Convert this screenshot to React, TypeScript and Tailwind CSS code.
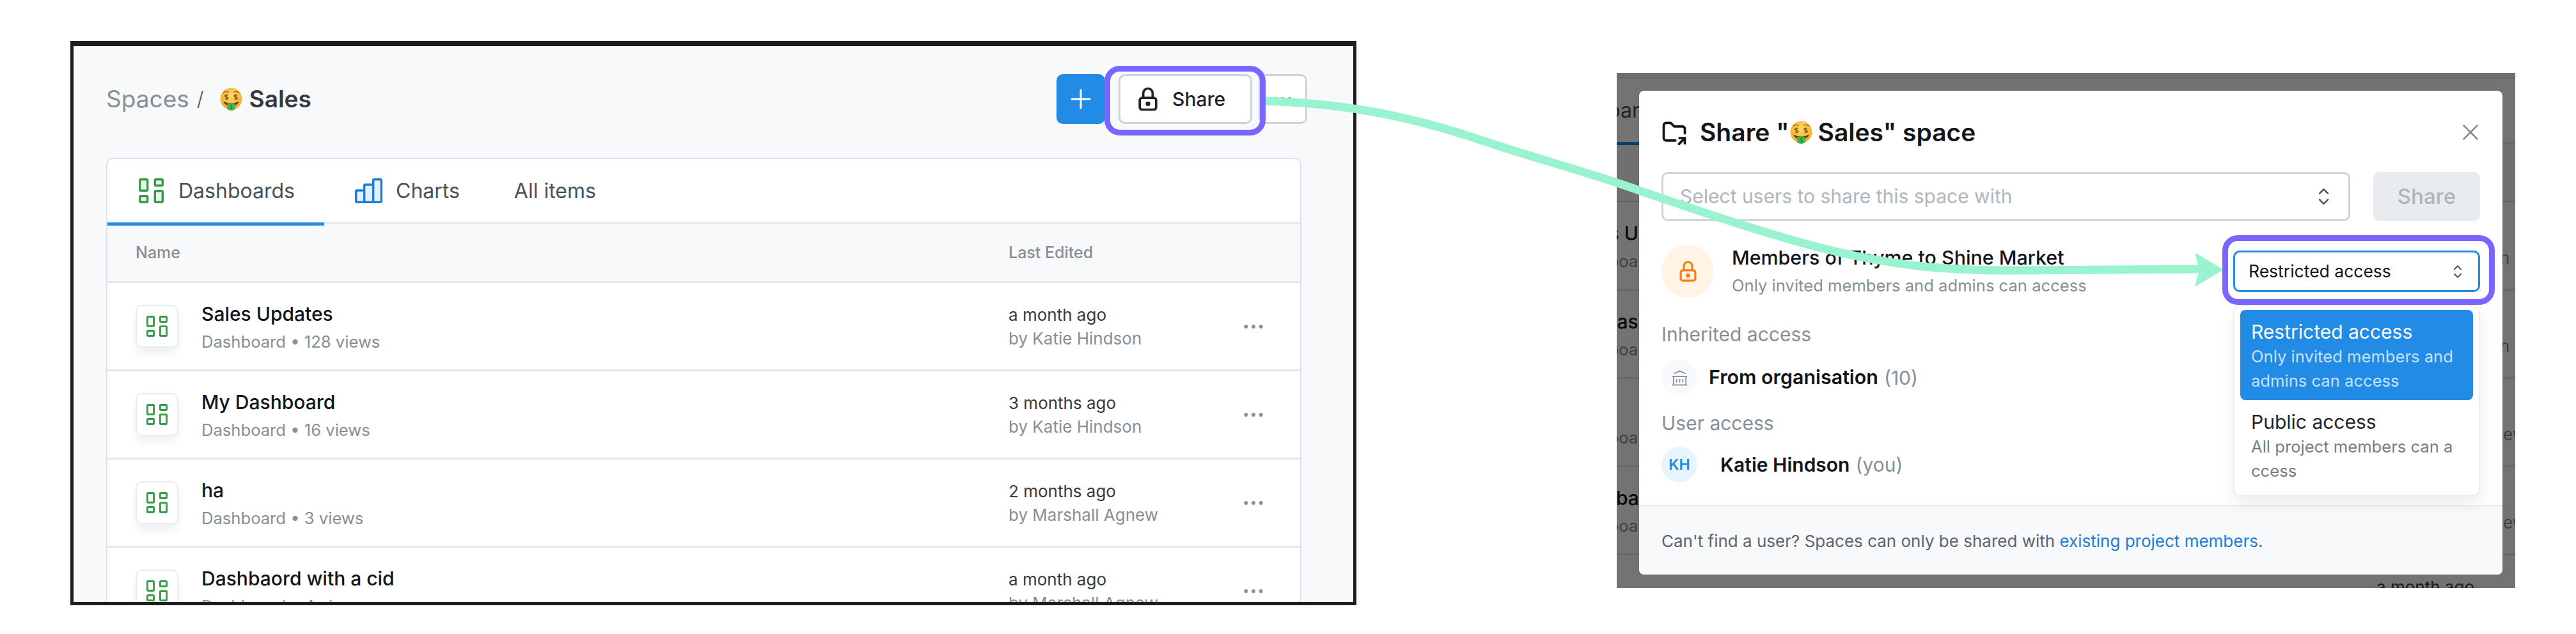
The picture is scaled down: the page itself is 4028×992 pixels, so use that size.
import { TbBuildingBank, TbDots, TbFolderShare, TbLock, TbPlus, TbSelector, TbX } from "react-icons/tb";

const rows = [
  { name: "Sales Updates", views: "128 views", date: "a month ago", by: "Katie Hindson" },
  { name: "My Dashboard", views: "16 views", date: "3 months ago", by: "Katie Hindson" },
  { name: "ha", views: "3 views", date: "2 months ago", by: "Marshall Agnew" },
  { name: "Dashbaord with a cid", views: "4 views", date: "a month ago", by: "Marshall Agnew" },
  { name: "Q4", views: "9 views", date: "a month ago", by: "Katie Hindson" },
];

function MoneyFace({ size }: { size: number }) {
  return (
    <svg width={size} height={size} viewBox="0 0 36 36" className="shrink-0">
      <defs>
        <radialGradient id="moneyFace" cx="50%" cy="35%" r="70%">
          <stop offset="0%" stopColor="#ffd96a" />
          <stop offset="100%" stopColor="#f0a51e" />
        </radialGradient>
      </defs>
      <circle cx="18" cy="17" r="16.5" fill="url(#moneyFace)" />
      <path d="M6 8q4-3 8-1M22 7q4-2 8 1" fill="none" stroke="#8a5a12" strokeWidth="1.2" strokeLinecap="round" />
      <path d="M11 10v8M25 10v8" stroke="#7a4a10" strokeWidth="1" />
      <path d="M13 12q-2-1.5-4 0t2 2.5 2 2.5-4 0M27 12q-2-1.5-4 0t2 2.5 2 2.5-4 0" fill="none" stroke="#7a4a10" strokeWidth="1.3" />
      <path d="M6 21q12 6 24 0q-2 7-12 7t-12-7z" fill="#6b3a10" />
      <path d="M12 24h12v9q-6 4-12 0z" fill="#3fb34f" />
      <path d="M18 26v7" stroke="#1f7a30" strokeWidth="1.4" />
    </svg>
  );
}

function DashboardIcon({ size, fill }: { size: number; fill: string }) {
  return (
    <svg width={size} height={size} viewBox="0 0 39 39" fill={fill} stroke="#2f9e44" strokeWidth="3.4" strokeLinejoin="round" className="shrink-0">
      <rect x="1.7" y="1.7" width="12" height="17.5" rx="1.5" />
      <rect x="25.3" y="1.7" width="12" height="9.6" rx="1.5" />
      <rect x="1.7" y="27.7" width="12" height="9.6" rx="1.5" />
      <rect x="25.3" y="19.7" width="12" height="17.6" rx="1.5" />
    </svg>
  );
}

function ChartIcon() {
  return (
    <svg width="43" height="39" viewBox="0 0 43 39" fill="#e7f0fa" stroke="#1c7ed6" strokeWidth="3.4" strokeLinejoin="round" className="shrink-0">
      <rect x="1.7" y="19" width="13" height="18.3" rx="1.5" />
      <rect x="14.7" y="10" width="14" height="27.3" rx="1" />
      <path d="M28.7 37.3V3.2q0-1.5 1.5-1.5h9.6q1.5 0 1.5 1.5v32.6q0 1.5-1.5 1.5z" />
    </svg>
  );
}

function PageContent({ ring }: { ring?: boolean }) {
  return (
    <div className="w-[2001px] shrink-0 bg-[#f8f9fa] pl-[51px] pt-[44px]">
      <div className="flex h-[78px] w-[1878px] items-center justify-between">
        <div className="flex items-center">
          <span className="text-[37px] text-[#868e96]">Spaces</span>
          <span className="ml-[12px] text-[31px] font-light text-[#495057]">/</span>
          <span className="ml-[24px]">
            <MoneyFace size={37} />
          </span>
          <span className="ml-[10px] text-[37px] font-semibold text-[#343a40]">Sales</span>
        </div>
        <div className="flex items-center">
          <button className="flex h-[78px] w-[76px] items-center justify-center rounded-[10px] bg-[#228be6] text-white">
            <TbPlus size={48} strokeWidth={1.5} />
          </button>
          <div className="relative ml-[21px]">
            <button className="flex h-[78px] w-[209px] items-center justify-start gap-[16px] rounded-[10px] border-[3px] border-[#ced4da] bg-white pl-[21px] text-[30px] font-medium text-[#212529]">
              <TbLock size={44} strokeWidth={2} />
              Share
            </button>
            {ring && <div className="absolute -top-[13px] -right-[21px] -bottom-[18px] -left-[22px] rounded-[24px] border-[9px] border-[#7866ff]" />}
          </div>
          <button className="ml-[10px] flex h-[78px] w-[76px] items-center justify-center rounded-[10px] border-[3px] border-[#ced4da] bg-white text-[#868e96]">
            <TbDots size={36} />
          </button>
        </div>
      </div>

      <div className="mt-[53px] w-[1869px] rounded-t-[10px] border-x-[2px] border-t-[2px] border-[#dee2e6] bg-white">
        <div className="flex h-[102px] border-b-[3px] border-[#e3e6ea] text-[32px] text-[#495057]">
          <div className="-mb-[3px] flex h-[104px] w-[339px] items-center border-b-[5px] border-[#228be6] pl-[49px]">
            <DashboardIcon size={39} fill="#eaf6ed" />
            <span className="ml-[23px]">Dashboards</span>
          </div>
          <div className="ml-[48px] flex items-center">
            <ChartIcon />
            <span className="ml-[21px]">Charts</span>
          </div>
          <div className="ml-[85px] flex items-center">All items</div>
        </div>
        <div className="flex h-[92px] items-center border-b-[3px] border-[#e3e6ea] bg-[#f8f9fa] pl-[44px] text-[25px] font-medium text-[#868e96]">
          <span className="w-[1365px]">Name</span>
          <span>Last Edited</span>
        </div>
        {rows.map((row) => (
          <div key={row.name} className="flex h-[138px] items-center border-b-[3px] border-[#e3e6ea] pl-[44px]">
            <div className="flex w-[1365px] items-center">
              <div className="flex h-[67px] w-[67px] items-center justify-center rounded-[10px] border-[2px] border-[#e9ecef] bg-white shadow-[0_10px_14px_rgba(0,0,0,0.06)]">
                <DashboardIcon size={33} fill="#ffffff" />
              </div>
              <div className="ml-[36px] pt-[4px]">
                <div className="text-[30px] leading-[44px] font-medium text-[#111418]">{row.name}</div>
                <div className="text-[25.6px] leading-[43px] text-[#868e96]">Dashboard • {row.views}</div>
              </div>
            </div>
            <div className="w-[363px]">
              <div className="text-[26px] leading-[37px] text-[#343a40]">{row.date}</div>
              <div className="text-[26px] leading-[37px] text-[#868e96]">by {row.by}</div>
            </div>
            <TbDots size={40} strokeWidth={1.5} className="text-[#868e96]" />
          </div>
        ))}
      </div>
    </div>
  );
}

function ShareModal() {
  return (
    <div className="absolute top-[28px] left-[35px] flex h-[757px] w-[1350px] flex-col rounded-[8px] bg-white">
      <div className="mt-[37px] flex h-[56px] items-center justify-between pr-[29px] pl-[33px]">
        <div className="flex items-center text-[39px] font-semibold text-[#111418]">
          <TbFolderShare size={44} strokeWidth={2} />
          <span className="ml-[18px]">Share "</span>
          <MoneyFace size={37} />
          <span className="ml-[8px]">Sales" space</span>
        </div>
        <TbX size={42} strokeWidth={1.5} className="text-[#868e96]" />
      </div>

      <div className="mt-[34px] flex gap-[36px] px-[35px]">
        <div className="flex h-[77px] w-[1077px] items-center justify-between rounded-[10px] border-[3px] border-[#ced4da] pr-[19px] pl-[26px] text-[30px] text-[#adb5bd]">
          Select users to share this space with
          <TbSelector size={39} strokeWidth={1.5} className="text-[#495057]" />
        </div>
        <div className="flex h-[77px] w-[167px] items-center justify-center rounded-[10px] bg-[#e9ecef] text-[33px] font-medium text-[#adb5bd]">Share</div>
      </div>

      <div className="relative mt-[37px] flex h-[83px] items-center px-[35px]">
        <div className="flex h-[83px] w-[82px] items-center justify-center rounded-full bg-[#fff4e6] text-[#fd7e14]">
          <TbLock size={39} strokeWidth={2} />
        </div>
        <div className="ml-[28px]">
          <div className="text-[30.4px] leading-[43px] font-medium text-[#111418]">Members of Thyme to Shine Market</div>
          <div className="text-[25.6px] leading-[43px] text-[#868e96]">Only invited members and admins can access</div>
        </div>
        <div className="relative ml-auto">
          <div className="flex h-[65px] w-[386px] items-center justify-between rounded-[10px] border-[3px] border-[#228be6] bg-white pr-[17px] pl-[21px] text-[26.5px] text-[#111418]">
            Restricted access
            <TbSelector size={30} strokeWidth={1.5} className="text-[#495057]" />
          </div>
          <div className="absolute -top-[24px] -right-[23px] -bottom-[20px] -left-[17px] rounded-[24px] border-[9px] border-[#7866ff]" />
        </div>
        <div className="absolute top-[94px] right-[35px] z-10 h-[299px] w-[386px] rounded-[10px] border-[2px] border-[#eceef1] bg-white px-[9px] pt-[6px] shadow-[0_12px_24px_rgba(0,0,0,0.08)]">
          <div className="h-[141px] rounded-[8px] bg-[#228be6] pt-[14px] pl-[17px] text-[#c5e2fb]">
            <div className="text-[30px] leading-[40px] text-white">Restricted access</div>
            <div className="text-[25.6px] leading-[38px]">
              Only invited members and
              <br />
              admins can access
            </div>
          </div>
          <div className="pt-[14px] pl-[17px] text-[#777c82]">
            <div className="text-[30px] leading-[40px] text-[#212529]">Public access</div>
            <div className="text-[25.6px] leading-[38px]">
              All project members can a
              <br />
              ccess
            </div>
          </div>
        </div>
      </div>

      <div className="mt-[37px] px-[35px] text-[30px] leading-[40px] text-[#868e96]">Inherited access</div>
      <div className="mt-[20px] flex items-center px-[35px] text-[30px]">
        <div className="flex h-[56px] w-[56px] items-center justify-center rounded-full bg-[#f8f9fa] text-[#868e96]">
          <TbBuildingBank size={29} strokeWidth={1.5} />
        </div>
        <span className="ml-[18px] text-[30.4px] font-semibold text-[#111418]">From organisation</span>
        <span className="ml-[9px] text-[#868e96]">(10)</span>
      </div>
      <div className="mt-[23px] px-[35px] text-[30px] leading-[40px] text-[#868e96]">User access</div>
      <div className="mt-[17px] flex items-center px-[35px] text-[30px]">
        <div className="flex h-[56px] w-[56px] items-center justify-center rounded-full bg-[#e7f5ff] text-[23px] font-semibold text-[#228be6]">KH</div>
        <span className="ml-[36px] font-semibold text-[#111418]">Katie Hindson</span>
        <span className="ml-[9px] text-[#868e96]">(you)</span>
      </div>

      <div className="mt-auto flex h-[109px] items-center rounded-b-[8px] border-t-[3px] border-[#eef0f2] bg-[#f8f9fa] px-[35px] text-[26px] text-[#5c6470]">
        <span>
          Can't find a user? Spaces can only be shared with <span className="text-[#1c7ed6]">existing project members</span>.
        </span>
      </div>
    </div>
  );
}

export default function App() {
  return (
    <div className="relative flex h-[992px] w-[4028px] overflow-hidden bg-white pt-[64px] pl-[110px] [font-family:Inter,sans-serif]">
      <div className="h-[883px] w-[2011px] shrink-0 overflow-hidden border-x-[5px] border-t-[8px] border-b-[5px] border-[#1e1e1e] bg-[#f8f9fa]">
        <PageContent ring />
      </div>

      <div className="relative mt-[50px] ml-[407px] h-[806px] w-[1405px] shrink-0 overflow-hidden bg-[#f8f9fa]">
        <div className="-mt-[168px] -ml-[274px]">
          <PageContent />
        </div>
        <div className="absolute inset-0 bg-black/55" />
        <ShareModal />
      </div>

      <svg className="pointer-events-none absolute top-0 left-0" width="4028" height="992" viewBox="0 0 4028 992">
        <path
          d="M1979 158C2100 162 2200 180 2312 218C2400 248 2480 268 2563 298C2650 328 2800 380 2900 400C2960 412 3020 423 3150 423L3442 421"
          fill="none"
          stroke="#99f3cf"
          strokeWidth="13"
        />
        <path d="M3474 422L3434 398L3441 422L3434 446Z" fill="#99f3cf" stroke="#99f3cf" strokeWidth="3" strokeLinejoin="round" />
      </svg>
    </div>
  );
}
